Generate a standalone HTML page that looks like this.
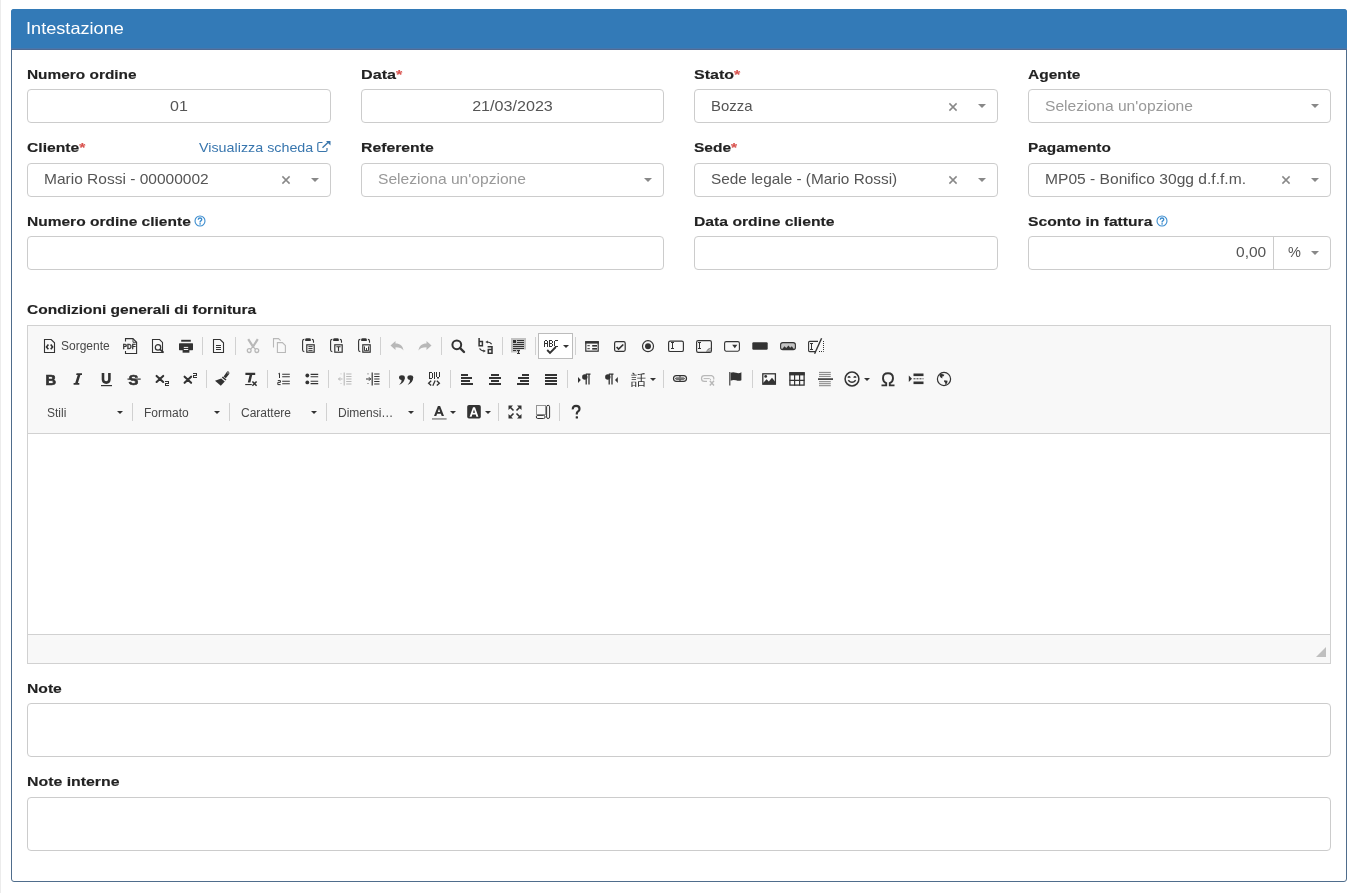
<!DOCTYPE html>
<html><head><meta charset="utf-8">
<style>
*{box-sizing:border-box;margin:0;padding:0}
html,body{width:1356px;height:893px;overflow:hidden;background:#fff;font-family:"Liberation Sans",sans-serif}
body{position:relative}
#wrap{position:absolute;left:0;top:0;width:1356px;height:893px;background:#fff;will-change:transform;overflow:hidden}
.strip{position:absolute;left:0;top:0;width:1px;height:893px;background:#ececec}
.panel{position:absolute;left:11px;top:9px;width:1336px;height:873px;border:1px solid #4f6d8c;border-radius:3px;background:#fff}
.phead{position:absolute;left:-1px;top:-1px;width:1336px;height:41px;background:#337ab7;border-radius:3px 3px 0 0;border-bottom:1px solid #4e6a94;box-shadow:inset 0 -1px 0 #4876ab}
.ptitle{position:absolute;font-size:16.5px;line-height:20px;color:#fff;white-space:nowrap;transform-origin:0 0}
.lbl{position:absolute;font-size:13.5px;line-height:20px;font-weight:bold;color:#222;white-space:nowrap;transform-origin:0 0;-webkit-text-stroke:0.15px #222}
.req{color:#d9534f;-webkit-text-stroke-color:#d9534f}
.inp{position:absolute;height:34px;border:1px solid #cccccc;border-radius:4px;background:#fff;font-size:14.5px;color:#555;white-space:nowrap}
.inp .t{position:absolute;top:-1px;line-height:32px;transform-origin:0 0}
.ph{color:#999}
.clr{position:absolute}
.arr{position:absolute;top:14px;width:0;height:0;border-left:4px solid transparent;border-right:4px solid transparent;border-top:4px solid #888}
.help{position:absolute;width:12px;height:12px}
.link{position:absolute;font-size:13.5px;line-height:20px;color:#3876ae;white-space:nowrap;transform-origin:0 0}
.ta{position:absolute;left:27px;width:1304px;border:1px solid #cccccc;border-radius:4px;background:#fff}
.ed{position:absolute;left:27px;top:325px;width:1304px;height:339px;border:1px solid #d1d1d1;background:#fff}
.etop{position:absolute;left:0;top:0;width:1302px;height:108px;background:#f8f8f8;border-bottom:1px solid #d1d1d1}
.efoot{position:absolute;left:0;top:308px;width:1302px;height:29px;background:#f8f8f8;border-top:1px solid #d1d1d1}
.ic{position:absolute;overflow:visible}
.sep{position:absolute;width:1px;height:18px;background:#d1d1d1}
.tarr{position:absolute;width:0;height:0;border-left:3px solid transparent;border-right:3px solid transparent;border-top:3px solid #333}
.ttxt{position:absolute;font-size:12px;line-height:16px;color:#484848;white-space:nowrap}
.spellbox{position:absolute;left:538px;top:333px;width:35px;height:26px;border:1px solid #bcbcbc;background:#fff}
.resz{position:absolute;left:1316px;top:647px;width:0;height:0;border-left:10px solid transparent;border-bottom:10px solid #bfbfbf}
</style></head><body><div id="wrap">
<div class="strip"></div>
<div class="panel">
  <div class="phead"></div>
</div>
<div class="ptitle" style="left:26px;top:18px;transform:scaleX(1.10)">Intestazione</div>
<div class="lbl" style="left:26.5px;top:65px;transform:scaleX(1.141)">Numero ordine</div>
<div class="lbl" style="left:360.5px;top:65px;transform:scaleX(1.198)">Data<span class="req">*</span></div>
<div class="lbl" style="left:693.5px;top:65px;transform:scaleX(1.187)">Stato<span class="req">*</span></div>
<div class="lbl" style="left:1027.5px;top:65px;transform:scaleX(1.147)">Agente</div>
<div class="inp" style="left:27px;top:89px;width:304px"><span class="t" style="left:0;top:0px;width:302px;text-align:center;transform:scaleX(1.104);transform-origin:50% 0">01</span></div>
<div class="inp" style="left:361px;top:89px;width:303px"><span class="t" style="left:0;top:0px;width:301px;text-align:center;transform:scaleX(1.112);transform-origin:50% 0">21/03/2023</span></div>
<div class="inp" style="left:694px;top:89px;width:304px"><span class="t" style="left:16px;top:0px;transform:scaleX(1.028)">Bozza</span><svg class="clr" width="10" height="10" viewBox="0 0 10 10" style="left:253px;top:12px"><path d="M1.4 1.4L8.6 8.6M8.6 1.4L1.4 8.6" stroke="#888" stroke-width="1.5"/></svg><span class="arr" style="left:283px"></span></div>
<div class="inp" style="left:1028px;top:89px;width:303px"><span class="t ph" style="left:16px;top:0px;transform:scaleX(1.077)">Seleziona un'opzione</span><span class="arr" style="left:282px"></span></div>
<div class="lbl" style="left:26.5px;top:138px;transform:scaleX(1.161)">Cliente<span class="req">*</span></div>
<div class="link" style="left:199px;top:138px;transform:scaleX(1.06)">Visualizza scheda</div>
<svg style="position:absolute;left:316px;top:140px" width="16" height="13" viewBox="0 0 16 13"><path d="M6.5 2.5H3Q1.8 2.5 1.8 3.7V10.3Q1.8 11.5 3 11.5H9.8Q11 11.5 11 10.3V8" fill="none" stroke="#3a76ab" stroke-width="1.2"/><path d="M6.5 7.7L13 1.5" stroke="#3a76ab" stroke-width="1.4"/><path d="M10 1H14.5V5.5Z" fill="#3a76ab"/></svg>
<div class="lbl" style="left:360.5px;top:138px;transform:scaleX(1.169)">Referente</div>
<div class="lbl" style="left:693.5px;top:138px;transform:scaleX(1.149)">Sede<span class="req">*</span></div>
<div class="lbl" style="left:1027.5px;top:138px;transform:scaleX(1.138)">Pagamento</div>
<div class="inp" style="left:27px;top:163px;width:304px"><span class="t" style="left:16px;top:-1px;transform:scaleX(1.07)">Mario Rossi - 00000002</span><svg class="clr" width="10" height="10" viewBox="0 0 10 10" style="left:253px;top:11px"><path d="M1.4 1.4L8.6 8.6M8.6 1.4L1.4 8.6" stroke="#888" stroke-width="1.5"/></svg><span class="arr" style="left:283px"></span></div>
<div class="inp" style="left:361px;top:163px;width:303px"><span class="t ph" style="left:16px;top:-1px;transform:scaleX(1.077)">Seleziona un'opzione</span><span class="arr" style="left:282px"></span></div>
<div class="inp" style="left:694px;top:163px;width:304px"><span class="t" style="left:16px;top:-1px;transform:scaleX(1.06)">Sede legale - (Mario Rossi)</span><svg class="clr" width="10" height="10" viewBox="0 0 10 10" style="left:253px;top:11px"><path d="M1.4 1.4L8.6 8.6M8.6 1.4L1.4 8.6" stroke="#888" stroke-width="1.5"/></svg><span class="arr" style="left:283px"></span></div>
<div class="inp" style="left:1028px;top:163px;width:303px"><span class="t" style="left:16px;top:-1px;transform:scaleX(1.075)">MP05 - Bonifico 30gg d.f.f.m.</span><svg class="clr" width="10" height="10" viewBox="0 0 10 10" style="left:252px;top:11px"><path d="M1.4 1.4L8.6 8.6M8.6 1.4L1.4 8.6" stroke="#888" stroke-width="1.5"/></svg><span class="arr" style="left:282px"></span></div>
<div class="lbl" style="left:26.5px;top:212px;transform:scaleX(1.149)">Numero ordine cliente</div>
<svg class="help" style="left:194px;top:215px" width="13" height="13" viewBox="0 0 13 13"><circle cx="6.5" cy="6.5" r="5.4" fill="none" stroke="#3c8dcf" stroke-width="1.2"/><path d="M4.6 5.1Q4.6 3.3 6.5 3.3Q8.4 3.3 8.4 4.9Q8.4 5.8 7.4 6.4Q6.6 6.9 6.6 7.8V8.1" fill="none" stroke="#3c8dcf" stroke-width="1.5"/><rect x="5.8" y="8.9" width="1.6" height="1.5" fill="#3c8dcf"/></svg>
<div class="lbl" style="left:693.5px;top:212px;transform:scaleX(1.163)">Data ordine cliente</div>
<div class="lbl" style="left:1027.5px;top:212px;transform:scaleX(1.16)">Sconto in fattura</div>
<svg class="help" style="left:1156px;top:215px" width="13" height="13" viewBox="0 0 13 13"><circle cx="6.5" cy="6.5" r="5.4" fill="none" stroke="#3c8dcf" stroke-width="1.2"/><path d="M4.6 5.1Q4.6 3.3 6.5 3.3Q8.4 3.3 8.4 4.9Q8.4 5.8 7.4 6.4Q6.6 6.9 6.6 7.8V8.1" fill="none" stroke="#3c8dcf" stroke-width="1.5"/><rect x="5.8" y="8.9" width="1.6" height="1.5" fill="#3c8dcf"/></svg>
<div class="inp" style="left:27px;top:236px;width:637px"></div>
<div class="inp" style="left:694px;top:236px;width:304px"></div>
<div class="inp" style="left:1028px;top:236px;width:303px"><span class="t" style="right:64px;transform:scaleX(1.07);transform-origin:100% 0">0,00</span><div style="position:absolute;left:244px;top:-1px;width:1px;height:34px;background:#cccccc"></div><span class="t" style="left:259px">%</span><span class="arr" style="left:282px"></span></div>
<div class="lbl" style="left:26.5px;top:300px;transform:scaleX(1.149)">Condizioni generali di fornitura</div>
<div class="lbl" style="left:26.5px;top:679px;transform:scaleX(1.161)">Note</div>
<div class="ta" style="top:703px;height:54px"></div>
<div class="lbl" style="left:26.5px;top:772px;transform:scaleX(1.175)">Note interne</div>
<div class="ta" style="top:797px;height:54px"></div>
<div class="ed"><div class="etop"></div><div class="efoot"></div></div>
<div class="spellbox"></div>
<svg class="ic" style="left:42px;top:338px;" width="16" height="16" viewBox="0 0 16 16"><path d="M2.5 1.5H9.2L12.5 4.8V14.5H2.5Z" fill="none" stroke="#333333" stroke-width="1.1"/><path d="M6.4 6.6L4.5 8.9L6.4 11.2M8.7 6.6L10.6 8.9L8.7 11.2" fill="none" stroke="#333333" stroke-width="1.6"/></svg>
<svg class="ic" style="left:122px;top:338px;" width="16" height="16" viewBox="0 0 16 16"><path d="M3.5 3.5V0.6H10.9L14.6 4.3V15.5H3.5V13" fill="none" stroke="#333333" stroke-width="1.1"/><path d="M11 0.6V4.3H14.6" fill="none" stroke="#333333" stroke-width="0.9"/><text x="0.8" y="11.2" font-family="Liberation Sans" font-weight="bold" font-size="6.4" fill="#333333" stroke="#333333" stroke-width="0.3" letter-spacing="0">PDF</text></svg>
<svg class="ic" style="left:150px;top:338px;" width="16" height="16" viewBox="0 0 16 16"><path d="M2.5 1.5H9.6L12.5 4.4V14.5H2.5Z" fill="none" stroke="#333333" stroke-width="1.1"/><circle cx="8" cy="9.4" r="2.7" fill="#f8f8f8" stroke="#333333" stroke-width="1.2"/><path d="M10 11.4L13.6 14.6" stroke="#333333" stroke-width="1.7"/></svg>
<svg class="ic" style="left:178px;top:338px;" width="16" height="16" viewBox="0 0 16 16"><rect x="3.2" y="1.8" width="9.6" height="1.9" fill="#333333"/><rect x="1" y="5.3" width="14" height="6.9" rx="0.6" fill="#333333"/><rect x="4.6" y="7.6" width="6.8" height="7.1" fill="#333333"/><path d="M5.8 9.4H10.2M5.8 11.5H10.2" stroke="#f8f8f8" stroke-width="1"/></svg>
<svg class="ic" style="left:210px;top:338px;" width="16" height="16" viewBox="0 0 16 16"><path d="M3.5 1.5H10.2L13.5 4.8V14.5H3.5Z" fill="none" stroke="#333333" stroke-width="1.1"/><path d="M6 7.5H11M6 9.5H11M6 11.5H11" stroke="#333333" stroke-width="1"/></svg>
<svg class="ic" style="left:245px;top:338px; opacity:0.32;" width="16" height="16" viewBox="0 0 16 16"><path d="M3.2 1.2L8 8.6M12.8 1.2L8 8.6" stroke="#333333" stroke-width="2.2"/><path d="M8 8.6L5.4 11.4M8 8.6L10.6 11.4" stroke="#333333" stroke-width="1.3"/><circle cx="4.2" cy="12.6" r="1.9" fill="none" stroke="#333333" stroke-width="1.3"/><circle cx="11.8" cy="12.6" r="1.9" fill="none" stroke="#333333" stroke-width="1.3"/></svg>
<svg class="ic" style="left:271px;top:338px; opacity:0.32;" width="16" height="16" viewBox="0 0 16 16"><g fill="none" stroke="#333333" stroke-width="1.1"><path d="M2.5 9.5V0.6H7.5L9.6 2.7"/><path d="M6.4 4.6H11.4L14.4 7.6V14.5H6.4Z"/></g></svg>
<svg class="ic" style="left:300px;top:338px;" width="16" height="16" viewBox="0 0 16 16"><path d="M4.3 1.4Q2.6 1.4 2.6 3V12Q2.6 13.6 4.3 13.6M11.9 1.4Q13.5 1.4 13.5 3V4.8" fill="none" stroke="#333333" stroke-width="1.1"/><path d="M5.2 3V1.6Q5.2 0.2 6.6 0.2H9.4Q10.8 0.2 10.8 1.6V3Z" fill="#333333"/><rect x="6.8" y="6.8" width="7.4" height="7.4" fill="none" stroke="#333333" stroke-width="1.2"/><path d="M8.4 8.6H12.6M8.4 10.5H12.6M8.4 12.4H12.6" stroke="#333333" stroke-width="0.95"/></svg>
<svg class="ic" style="left:328px;top:338px;" width="16" height="16" viewBox="0 0 16 16"><path d="M4.3 1.4Q2.6 1.4 2.6 3V12Q2.6 13.6 4.3 13.6M11.9 1.4Q13.5 1.4 13.5 3V4.8" fill="none" stroke="#333333" stroke-width="1.1"/><path d="M5.2 3V1.6Q5.2 0.2 6.6 0.2H9.4Q10.8 0.2 10.8 1.6V3Z" fill="#333333"/><rect x="6.8" y="6.8" width="7.4" height="7.4" fill="none" stroke="#333333" stroke-width="1.2"/><path d="M8.4 8.7H12.6M10.5 8.7V12.9" stroke="#333333" stroke-width="1.1"/></svg>
<svg class="ic" style="left:356px;top:338px;" width="16" height="16" viewBox="0 0 16 16"><path d="M4.3 1.4Q2.6 1.4 2.6 3V12Q2.6 13.6 4.3 13.6M11.9 1.4Q13.5 1.4 13.5 3V4.8" fill="none" stroke="#333333" stroke-width="1.1"/><path d="M5.2 3V1.6Q5.2 0.2 6.6 0.2H9.4Q10.8 0.2 10.8 1.6V3Z" fill="#333333"/><rect x="6.8" y="6.8" width="7.4" height="7.4" fill="none" stroke="#333333" stroke-width="1.2"/><path d="M8.5 8.4V12.7H12.5V8.4M10.5 10V12.7" fill="none" stroke="#333333" stroke-width="0.95"/></svg>
<svg class="ic" style="left:389px;top:338px; opacity:0.32;" width="16" height="16" viewBox="0 0 16 16"><path d="M1.5 7.5L6.5 3V5.5C11 5.5 14 8 14.5 12.5C13 10 10.5 9.3 6.5 9.3V12Z" fill="#333333"/></svg>
<svg class="ic" style="left:417px;top:338px; opacity:0.32;" width="16" height="16" viewBox="0 0 16 16"><path d="M14.5 7.5L9.5 3V5.5C5 5.5 2 8 1.5 12.5C3 10 5.5 9.3 9.5 9.3V12Z" fill="#333333"/></svg>
<svg class="ic" style="left:450px;top:338px;" width="16" height="16" viewBox="0 0 16 16"><circle cx="6.8" cy="6.8" r="4.4" fill="none" stroke="#333333" stroke-width="2"/><path d="M10 10L14 14" stroke="#333333" stroke-width="2.4" stroke-linecap="round"/></svg>
<svg class="ic" style="left:478px;top:338px;" width="16" height="16" viewBox="0 0 16 16"><path d="M1.1 0V7.8H4.4V3.6H1.1" fill="none" stroke="#333333" stroke-width="1.5"/><path d="M9.6 8.7H14V15.3H10.3V11.6H14" fill="none" stroke="#333333" stroke-width="1.5"/><path d="M13.6 6.3Q12.6 4.2 9 4" fill="none" stroke="#333333" stroke-width="1.1"/><path d="M7.4 4L9.8 2.4V5.6Z" fill="#333333"/><path d="M1.6 10.4Q2.6 12.8 6 13" fill="none" stroke="#333333" stroke-width="1.1"/><path d="M7.8 13L5.4 11.4V14.6Z" fill="#333333"/></svg>
<svg class="ic" style="left:510px;top:338px;" width="16" height="16" viewBox="0 0 16 16"><path d="M1 0H16V11.6H10V14.6H1Z" fill="#c2c2c2"/><rect x="3" y="2" width="3" height="3" fill="#333333"/><rect x="7" y="2" width="7" height="1" fill="#333333"/><rect x="7" y="4" width="7" height="1" fill="#333333"/><rect x="3" y="6" width="11" height="1" fill="#333333"/><rect x="3" y="8" width="11" height="1" fill="#333333"/><rect x="3" y="10" width="11" height="1" fill="#333333"/><rect x="3" y="12" width="3" height="1" fill="#333333"/><rect x="7" y="12" width="3" height="1" fill="#333333"/><rect x="8" y="12" width="1" height="4" fill="#333333"/><rect x="7" y="15" width="3" height="1" fill="#333333"/></svg>
<svg class="ic" style="left:543px;top:338px;" width="16" height="16" viewBox="0 0 16 16"><rect x="1" y="3" width="1" height="6" fill="#333333"/><rect x="4" y="3" width="1" height="6" fill="#333333"/><rect x="2" y="2" width="2" height="1" fill="#333333"/><rect x="2" y="5" width="2" height="1" fill="#333333"/><rect x="6" y="2" width="1" height="7" fill="#333333"/><rect x="7" y="2" width="2" height="1" fill="#333333"/><rect x="7" y="5" width="2" height="1" fill="#333333"/><rect x="7" y="8" width="2" height="1" fill="#333333"/><rect x="9" y="3" width="1" height="2" fill="#333333"/><rect x="9" y="6" width="1" height="2" fill="#333333"/><rect x="11" y="3" width="1" height="5" fill="#333333"/><rect x="12" y="2" width="3" height="1" fill="#333333"/><rect x="12" y="8" width="3" height="1" fill="#333333"/><path d="M4.2 12L7 14.8L12.8 9" fill="none" stroke="#333333" stroke-width="1.9"/></svg>
<svg class="ic" style="left:584px;top:338px;" width="16" height="16" viewBox="0 0 16 16"><rect x="1.8" y="3.8" width="12.4" height="9.4" fill="none" stroke="#333333" stroke-width="1.2"/><rect x="1.2" y="3.2" width="13.6" height="2.4" fill="#333333"/><path d="M3.4 7.7H5.8M3.4 10.7H5.8" stroke="#333333" stroke-width="1"/><rect x="8.2" y="7" width="4.8" height="1.6" fill="#333333"/><rect x="8.2" y="10" width="4.8" height="1.6" fill="#333333"/></svg>
<svg class="ic" style="left:612px;top:338px;" width="16" height="16" viewBox="0 0 16 16"><rect x="2.6" y="3.7" width="10.6" height="9.6" rx="1.5" fill="none" stroke="#333333" stroke-width="1.2"/><path d="M4.6 9L6.6 11L11.3 6.5" fill="none" stroke="#333333" stroke-width="1.7"/></svg>
<svg class="ic" style="left:640px;top:338px;" width="16" height="16" viewBox="0 0 16 16"><circle cx="8" cy="8.2" r="5.5" fill="none" stroke="#333333" stroke-width="1.2"/><circle cx="8" cy="8.2" r="3" fill="#333333"/></svg>
<svg class="ic" style="left:668px;top:338px;" width="16" height="16" viewBox="0 0 16 16"><rect x="0.6" y="3.1" width="14.8" height="10.4" rx="1.6" fill="none" stroke="#333333" stroke-width="1.15"/><rect x="3" y="4" width="3" height="1" fill="#333333"/><rect x="4" y="4" width="1" height="7" fill="#333333"/><rect x="3" y="10" width="3" height="1" fill="#333333"/></svg>
<svg class="ic" style="left:696px;top:338px;" width="16" height="16" viewBox="0 0 16 16"><rect x="0.6" y="2.6" width="14.8" height="11.8" rx="1.6" fill="none" stroke="#333333" stroke-width="1.15"/><rect x="2" y="4" width="3" height="1" fill="#333333"/><rect x="3" y="4" width="1" height="7" fill="#333333"/><rect x="2" y="10" width="3" height="1" fill="#333333"/><path d="M10.5 14L14.8 9.7M12.5 14L14.8 11.7M11 12.5L13.3 10.2" stroke="#333333" stroke-width="0.7"/></svg>
<svg class="ic" style="left:724px;top:338px;" width="16" height="16" viewBox="0 0 16 16"><rect x="0.6" y="3.6" width="14.8" height="9.6" rx="1.6" fill="none" stroke="#333333" stroke-width="1.1"/><path d="M8.2 6.8H13.4L10.8 10.2Z" fill="#333333"/></svg>
<svg class="ic" style="left:752px;top:338px;" width="16" height="16" viewBox="0 0 16 16"><rect x="0.3" y="4.3" width="15.4" height="7.4" rx="1.2" fill="#333333"/></svg>
<svg class="ic" style="left:780px;top:338px;" width="16" height="16" viewBox="0 0 16 16"><rect x="0.6" y="4.6" width="14.8" height="7" rx="2.2" fill="#c4c4c4" stroke="#333333" stroke-width="1.1"/><path d="M2 11.3L4.5 8.2L6.3 10L8.5 7.6L10.2 9.8L11.8 8.2L14 11.3Z" fill="#333333"/></svg>
<svg class="ic" style="left:808px;top:338px;" width="16" height="16" viewBox="0 0 16 16"><path d="M7.8 13.6H1.6Q0.6 13.6 0.6 12.6V4.4Q0.6 3.4 1.6 3.4H10" fill="none" stroke="#333333" stroke-width="1.1"/><rect x="2" y="5" width="3" height="1" fill="#333333"/><rect x="3" y="5" width="1" height="7" fill="#333333"/><rect x="2" y="11" width="3" height="1" fill="#333333"/><path d="M13.6 0.3L6.6 15.7" stroke="#333333" stroke-width="1.4"/><path d="M15.5 3V13.5H10" stroke="#333333" stroke-width="1" stroke-dasharray="1 1" fill="none"/></svg>
<div class="sep" style="left:202px;top:337px"></div>
<div class="sep" style="left:235px;top:337px"></div>
<div class="sep" style="left:380px;top:337px"></div>
<div class="sep" style="left:441px;top:337px"></div>
<div class="sep" style="left:502px;top:337px"></div>
<div class="sep" style="left:535px;top:337px"></div>
<div class="sep" style="left:575px;top:337px"></div>
<div class="tarr" style="left:562.5px;top:344.5px"></div>
<svg class="ic" style="left:42px;top:371px;" width="16" height="16" viewBox="0 0 16 16"><text x="3.5" y="13.8" font-family="Liberation Sans" font-weight="bold" font-size="14.6" fill="#333333" stroke="#333333" stroke-width="0.7">B</text></svg>
<svg class="ic" style="left:70px;top:371px;" width="16" height="16" viewBox="0 0 16 16"><path d="M6.6 2.3H12V4H10.4L7.9 12.1H9.3V13.8H3.6V12.1H5.2L7.7 4H6.1Z" fill="#333333"/></svg>
<svg class="ic" style="left:98px;top:371px;" width="16" height="16" viewBox="0 0 16 16"><path d="M5 2V8.6Q5 11.6 8.2 11.6Q11.4 11.6 11.4 8.6V2" fill="none" stroke="#333333" stroke-width="2.6"/><rect x="3" y="14" width="11" height="1.2" fill="#333333"/></svg>
<svg class="ic" style="left:126px;top:371px;" width="16" height="16" viewBox="0 0 16 16"><text x="2.6" y="13.9" font-family="Liberation Sans" font-weight="bold" font-size="14.8" fill="#333333" stroke="#333333" stroke-width="0.6">S</text><rect x="1.5" y="7.5" width="13.2" height="1.2" fill="#333333"/></svg>
<svg class="ic" style="left:154px;top:371px;" width="16" height="16" viewBox="0 0 16 16"><path d="M2.6 4.9L9.2 11M9.2 4.9L2.6 11" stroke="#333333" stroke-width="2.1" stroke-linecap="round"/><rect x="11" y="10" width="4" height="1" fill="#333333"/><rect x="14" y="10" width="1" height="3" fill="#333333"/><rect x="11" y="12" width="4" height="1" fill="#333333"/><rect x="11" y="12" width="1" height="3" fill="#333333"/><rect x="11" y="14" width="4" height="1" fill="#333333"/></svg>
<svg class="ic" style="left:182px;top:371px;" width="16" height="16" viewBox="0 0 16 16"><path d="M2.6 5.7L9.1 11.8M9.1 5.7L2.6 11.8" stroke="#333333" stroke-width="2.1" stroke-linecap="round"/><rect x="11" y="2" width="4" height="1" fill="#333333"/><rect x="14" y="2" width="1" height="3" fill="#333333"/><rect x="11" y="4" width="4" height="1" fill="#333333"/><rect x="11" y="4" width="1" height="3" fill="#333333"/><rect x="11" y="6" width="4" height="1" fill="#333333"/></svg>
<svg class="ic" style="left:214px;top:371px;" width="16" height="16" viewBox="0 0 16 16"><path d="M14.6 0.4Q16.2 1.8 15 3.2L11.8 7.2L9.6 5.4L12.6 1.2Q13.6 -0.3 14.6 0.4Z" fill="#333333"/><circle cx="14" cy="1.9" r="0.6" fill="#f8f8f8"/><path d="M8.9 5.4L12.5 8.4L11.4 9.5L7.8 6.5Z" fill="#333333"/><path d="M7.2 7.4L10.8 10.4L6.8 14.8L1 9.8Z" fill="#333333"/></svg>
<svg class="ic" style="left:242px;top:371px;" width="16" height="16" viewBox="0 0 16 16"><path d="M3.4 1.8H13.2V4H10.2L8.4 11.6H5.8L7.6 4H3.4Z" fill="#333333"/><rect x="3.2" y="13" width="6.6" height="1.1" fill="#333333"/><path d="M10.4 10.4L14.6 14.8M14.6 10.4L10.4 14.8" stroke="#333333" stroke-width="1.5"/></svg>
<svg class="ic" style="left:276px;top:371px;" width="16" height="16" viewBox="0 0 16 16"><path d="M2.4 2.8L3.5 2.2V7" fill="none" stroke="#333333" stroke-width="1"/><path d="M1.8 9.6H4.4V11.4H1.8V13.6H4.6" fill="none" stroke="#333333" stroke-width="1"/><path d="M6.2 3.2H13.8M6.2 5.7H13.8M6.2 10.2H13.8M6.2 12.7H13.8" stroke="#333333" stroke-width="1.1"/></svg>
<svg class="ic" style="left:304px;top:371px;" width="16" height="16" viewBox="0 0 16 16"><circle cx="3.3" cy="4.5" r="1.9" fill="#333333"/><circle cx="3.3" cy="11.4" r="1.9" fill="#333333"/><path d="M6.6 3.4H14.2M6.6 5.7H14.2M6.6 10.2H14.2M6.6 12.6H14.2" stroke="#333333" stroke-width="1.1"/></svg>
<svg class="ic" style="left:337px;top:371px; opacity:0.32;" width="16" height="16" viewBox="0 0 16 16"><path d="M1.5 8H5.5M3.2 6.3L1.5 8L3.2 9.7" fill="none" stroke="#333333" stroke-width="1"/><path d="M7.2 1.5V14.5" stroke="#333333" stroke-width="1.1"/><path d="M9.2 3H14.5M9.2 5.5H14.5M9.2 8H14.5M9.2 10.5H14.5M9.2 13H14.5" stroke="#333333" stroke-width="1"/><path d="M4 2.5V4M4 12V13.5" stroke="#333333" stroke-width="1" stroke-dasharray="0.8 0.8"/></svg>
<svg class="ic" style="left:365px;top:371px;" width="16" height="16" viewBox="0 0 16 16"><path d="M1 8H5.5M4 6.3L5.7 8L4 9.7" fill="none" stroke="#333333" stroke-width="1"/><path d="M7.2 1.5V14.5" stroke="#333333" stroke-width="1.2"/><path d="M9.2 3H14.5M9.2 5.5H14.5M9.2 8H14.5M9.2 10.5H14.5M9.2 13H14.5" stroke="#333333" stroke-width="1.1"/><path d="M3 2.5V4M3 12V13.5" stroke="#333333" stroke-width="1" stroke-dasharray="0.8 0.8"/></svg>
<svg class="ic" style="left:398px;top:371px;" width="16" height="16" viewBox="0 0 16 16"><ellipse cx="3.9" cy="6.6" rx="2.9" ry="2.4" fill="#333333"/><path d="M3.6 8.6L6.8 6.4Q6.8 11.4 1.2 13.9Q4.2 11.4 3.6 8.6Z" fill="#333333"/><ellipse cx="12.3" cy="6.6" rx="2.9" ry="2.4" fill="#333333"/><path d="M12.0 8.6L15.2 6.4Q15.2 11.4 9.6 13.9Q12.600000000000001 11.4 12.0 8.6Z" fill="#333333"/></svg>
<svg class="ic" style="left:426px;top:371px;" width="16" height="16" viewBox="0 0 16 16"><rect x="3" y="1" width="1" height="7" fill="#333333"/><rect x="4" y="1" width="2" height="1" fill="#333333"/><rect x="4" y="7" width="2" height="1" fill="#333333"/><rect x="6" y="2" width="1" height="5" fill="#333333"/><rect x="8" y="1" width="1" height="7" fill="#333333"/><rect x="10" y="1" width="1" height="5" fill="#333333"/><rect x="13" y="1" width="1" height="5" fill="#333333"/><rect x="11" y="6" width="2" height="1" fill="#333333"/><rect x="11.5" y="7" width="1" height="1" fill="#333333"/><path d="M5.2 9.8L2.6 12.2L5.2 14.6M10.8 9.8L13.4 12.2L10.8 14.6M9.2 9.6L6.8 14.8" fill="none" stroke="#333333" stroke-width="1.3"/></svg>
<svg class="ic" style="left:459px;top:371px;" width="16" height="16" viewBox="0 0 16 16"><rect x="2" y="3" width="7" height="2" fill="#333333"/><rect x="2" y="6" width="11" height="2" fill="#333333"/><rect x="2" y="9" width="9" height="2" fill="#333333"/><rect x="2" y="12" width="12" height="2" fill="#333333"/></svg>
<svg class="ic" style="left:487px;top:371px;" width="16" height="16" viewBox="0 0 16 16"><rect x="4" y="3" width="8" height="2" fill="#333333"/><rect x="2" y="6" width="12" height="2" fill="#333333"/><rect x="4" y="9" width="8" height="2" fill="#333333"/><rect x="2" y="12" width="12" height="2" fill="#333333"/></svg>
<svg class="ic" style="left:515px;top:371px;" width="16" height="16" viewBox="0 0 16 16"><rect x="7" y="3" width="7" height="2" fill="#333333"/><rect x="3" y="6" width="11" height="2" fill="#333333"/><rect x="5" y="9" width="9" height="2" fill="#333333"/><rect x="2" y="12" width="12" height="2" fill="#333333"/></svg>
<svg class="ic" style="left:543px;top:371px;" width="16" height="16" viewBox="0 0 16 16"><rect x="2" y="3" width="12" height="2" fill="#333333"/><rect x="2" y="6" width="12" height="2" fill="#333333"/><rect x="2" y="9" width="12" height="2" fill="#333333"/><rect x="2" y="12" width="12" height="2" fill="#333333"/></svg>
<svg class="ic" style="left:576px;top:371px;" width="16" height="16" viewBox="0 0 16 16"><path d="M2 6L4.8 9L2 12Z" fill="#333333"/><path d="M9.8 3.2H14.5M10.2 3.2V13.4M13 3.2V13.4" stroke="#333333" stroke-width="1.3"/><circle cx="8.8" cy="6" r="2.7" fill="#333333"/></svg>
<svg class="ic" style="left:604px;top:371px;" width="16" height="16" viewBox="0 0 16 16"><path d="M13.8 6L11 9L13.8 12Z" fill="#333333"/><path d="M4.8 3.2H9.5M5.2 3.2V13.4M8 3.2V13.4" stroke="#333333" stroke-width="1.3"/><circle cx="3.8" cy="6" r="2.7" fill="#333333"/></svg>
<svg class="ic" style="left:631px;top:371px;" width="16" height="16" viewBox="0 0 16 16"><text x="0.4" y="14" font-family="Liberation Sans" font-size="15" fill="#333333">話</text></svg>
<svg class="ic" style="left:672px;top:371px;" width="16" height="16" viewBox="0 0 16 16"><path d="M8 4.6H4.4A2.9 2.9 0 0 0 4.4 10.4H8M8 4.6H11.6A2.9 2.9 0 0 1 11.6 10.4H8" fill="none" stroke="#333333" stroke-width="1.2"/><rect x="3.6" y="7" width="8.8" height="1.2" rx="0.6" fill="none" stroke="#333333" stroke-width="1"/><path d="M8 5V6.6M8 8.6V10" stroke="#333333" stroke-width="1.1"/></svg>
<svg class="ic" style="left:700px;top:371px; opacity:0.32;" width="16" height="16" viewBox="0 0 16 16"><path d="M8 4.6H4.4A2.9 2.9 0 0 0 4.4 10.4H7M8 4.6H11.6A2.9 2.9 0 0 1 13.6 8.6" fill="none" stroke="#333333" stroke-width="1.2"/><path d="M3.6 7.6H9.5L11 8.8" fill="none" stroke="#333333" stroke-width="1"/><path d="M9.8 9.8L14 14.5M14 9.8L9.8 14.5" stroke="#333333" stroke-width="1.4"/></svg>
<svg class="ic" style="left:728px;top:371px;" width="16" height="16" viewBox="0 0 16 16"><path d="M1.8 1V14.5" stroke="#333333" stroke-width="1.1"/><path d="M2.6 1.8Q5 0.8 8 1.8T13.4 1.3V9.3Q11 10.3 8 9.3T2.6 9.8Z" fill="#333333"/></svg>
<svg class="ic" style="left:761px;top:371px;" width="16" height="16" viewBox="0 0 16 16"><rect x="1.8" y="2.8" width="12.6" height="10.4" fill="none" stroke="#333333" stroke-width="1.3"/><circle cx="4.7" cy="5.4" r="1.4" fill="#333333"/><path d="M2 13.2L2 12L5.6 8.3L7.8 10.6L11 6.8L14.2 10.8V13.2Z" fill="#333333"/></svg>
<svg class="ic" style="left:789px;top:371px;" width="16" height="16" viewBox="0 0 16 16"><rect x="0.9" y="1.9" width="14.2" height="12.2" fill="none" stroke="#333333" stroke-width="1.3"/><rect x="0.3" y="1.2" width="15.4" height="3.2" fill="#333333"/><path d="M0.5 9.3H15.5M5.6 4V14.5M10.6 4V14.5" stroke="#333333" stroke-width="1.2"/></svg>
<svg class="ic" style="left:817px;top:371px;" width="16" height="16" viewBox="0 0 16 16"><path d="M2 1.4H13.8M2 3.4H13.8M2 5.4H13.8M2 10.7H13.8M2 12.7H13.8M2 14.7H13.8" stroke="#333333" stroke-width="0.6"/><rect x="1" y="7.3" width="15" height="1.6" fill="#333333"/></svg>
<svg class="ic" style="left:844px;top:371px;" width="16" height="16" viewBox="0 0 16 16"><circle cx="8" cy="8" r="6.9" fill="none" stroke="#333333" stroke-width="1.5"/><path d="M3.9 6.6Q5 4.9 6.3 6.6M9.7 6.6Q11 4.9 12.1 6.6" fill="none" stroke="#333333" stroke-width="1.3"/><path d="M4.3 9.2Q8 13.4 11.7 9.2" fill="none" stroke="#333333" stroke-width="1.5"/></svg>
<svg class="ic" style="left:880px;top:371px;" width="16" height="16" viewBox="0 0 16 16"><path d="M1.5 14.4H6.2V12.2Q3 10.6 3 7.2Q3 2.2 8 2.2Q13 2.2 13 7.2Q13 10.6 9.8 12.2V14.4H14.5" fill="none" stroke="#333333" stroke-width="1.9"/></svg>
<svg class="ic" style="left:908px;top:371px;" width="16" height="16" viewBox="0 0 16 16"><path d="M0.8 4.6L4 7.8L0.8 11Z" fill="#333333"/><rect x="5.5" y="2.5" width="10" height="2.6" fill="#333333"/><rect x="5.5" y="10.5" width="10" height="2.6" fill="#333333"/><path d="M5.5 7.8H15.5" stroke="#333333" stroke-width="1" stroke-dasharray="2 1"/></svg>
<svg class="ic" style="left:936px;top:371px;" width="16" height="16" viewBox="0 0 16 16"><circle cx="8" cy="8" r="6.6" fill="none" stroke="#333333" stroke-width="1.2"/><path d="M4.6 2.6L8.4 3.8L7.6 5.2L6.2 5.6L6.4 7.6L4.6 6.6L3.4 4.6Z" fill="#333333"/><path d="M8.2 9.2L11.6 9.8L11.2 11.8L9.6 14.4L9.2 11.8L8 10.6Z" fill="#333333"/></svg>
<div class="sep" style="left:206px;top:370px"></div>
<div class="sep" style="left:267px;top:370px"></div>
<div class="sep" style="left:328px;top:370px"></div>
<div class="sep" style="left:389px;top:370px"></div>
<div class="sep" style="left:450px;top:370px"></div>
<div class="sep" style="left:567px;top:370px"></div>
<div class="sep" style="left:663px;top:370px"></div>
<div class="sep" style="left:752px;top:370px"></div>
<div class="tarr" style="left:650px;top:378.0px"></div>
<div class="tarr" style="left:863.5px;top:378.0px"></div>
<svg class="ic" style="left:431px;top:404px;" width="16" height="16" viewBox="0 0 16 16"><path d="M3 12L6.9 2.1H9.1L13 12H10.7L9.9 9.8H6.1L5.3 12ZM6.8 7.9H9.2L8 4.7Z" fill="#333333"/><rect x="1" y="14" width="14.6" height="1.8" fill="#a0a0a0"/></svg>
<svg class="ic" style="left:466px;top:404px;" width="16" height="16" viewBox="0 0 16 16"><rect x="1.2" y="1" width="13.6" height="13.6" rx="1.8" fill="#333333"/><path d="M3.6 12.7L7 3.3H9L12.4 12.7H10.4L9.7 10.6H6.3L5.6 12.7ZM6.9 8.8H9.1L8 5.6Z" fill="#fff"/></svg>
<svg class="ic" style="left:507px;top:404px;" width="16" height="16" viewBox="0 0 16 16"><path d="M1.5 1.5H6L1.5 6ZM14.5 1.5V6L10 1.5ZM1.5 14.5V10L6 14.5ZM14.5 14.5H10L14.5 10Z" fill="#333333"/><path d="M3 3L6.5 6.5M13 3L9.5 6.5M3 13L6.5 9.5M13 13L9.5 9.5" stroke="#333333" stroke-width="1.6"/></svg>
<svg class="ic" style="left:535px;top:404px;" width="16" height="16" viewBox="0 0 16 16"><path d="M1.5 1.5H10.5V10.5H1.5Z" fill="none" stroke="#333333" stroke-width="1" stroke-dasharray="1 1"/><rect x="11.6" y="1.3" width="3" height="13.2" rx="1.5" fill="none" stroke="#333333" stroke-width="1"/><rect x="1.3" y="11.4" width="8.8" height="3.1" rx="1.5" fill="none" stroke="#333333" stroke-width="1"/></svg>
<svg class="ic" style="left:568px;top:404px;" width="16" height="16" viewBox="0 0 16 16"><path d="M4.8 5.4Q4.6 1.9 8.1 1.9Q11.5 1.9 11.5 4.9Q11.5 6.6 9.8 7.6Q8.8 8.3 8.8 9.6V10.4" fill="none" stroke="#333333" stroke-width="2.2"/><rect x="7.7" y="12.2" width="2.3" height="2.3" rx="0.5" fill="#333333"/></svg>
<div class="sep" style="left:132px;top:403px"></div>
<div class="sep" style="left:229px;top:403px"></div>
<div class="sep" style="left:326px;top:403px"></div>
<div class="sep" style="left:423px;top:403px"></div>
<div class="sep" style="left:498px;top:403px"></div>
<div class="sep" style="left:559px;top:403px"></div>
<div class="tarr" style="left:450px;top:411.0px"></div>
<div class="tarr" style="left:485px;top:411.0px"></div>
<div class="tarr" style="left:117px;top:411.0px"></div>
<div class="tarr" style="left:214px;top:411.0px"></div>
<div class="tarr" style="left:311px;top:411.0px"></div>
<div class="tarr" style="left:408px;top:411.0px"></div>
<div class="ttxt" style="left:61px;top:338px">Sorgente</div>
<div class="ttxt" style="left:47px;top:405px">Stili</div>
<div class="ttxt" style="left:144px;top:405px">Formato</div>
<div class="ttxt" style="left:241px;top:405px">Carattere</div>
<div class="ttxt" style="left:338px;top:405px">Dimensi…</div>
<div class="resz"></div>
</div></body></html>
